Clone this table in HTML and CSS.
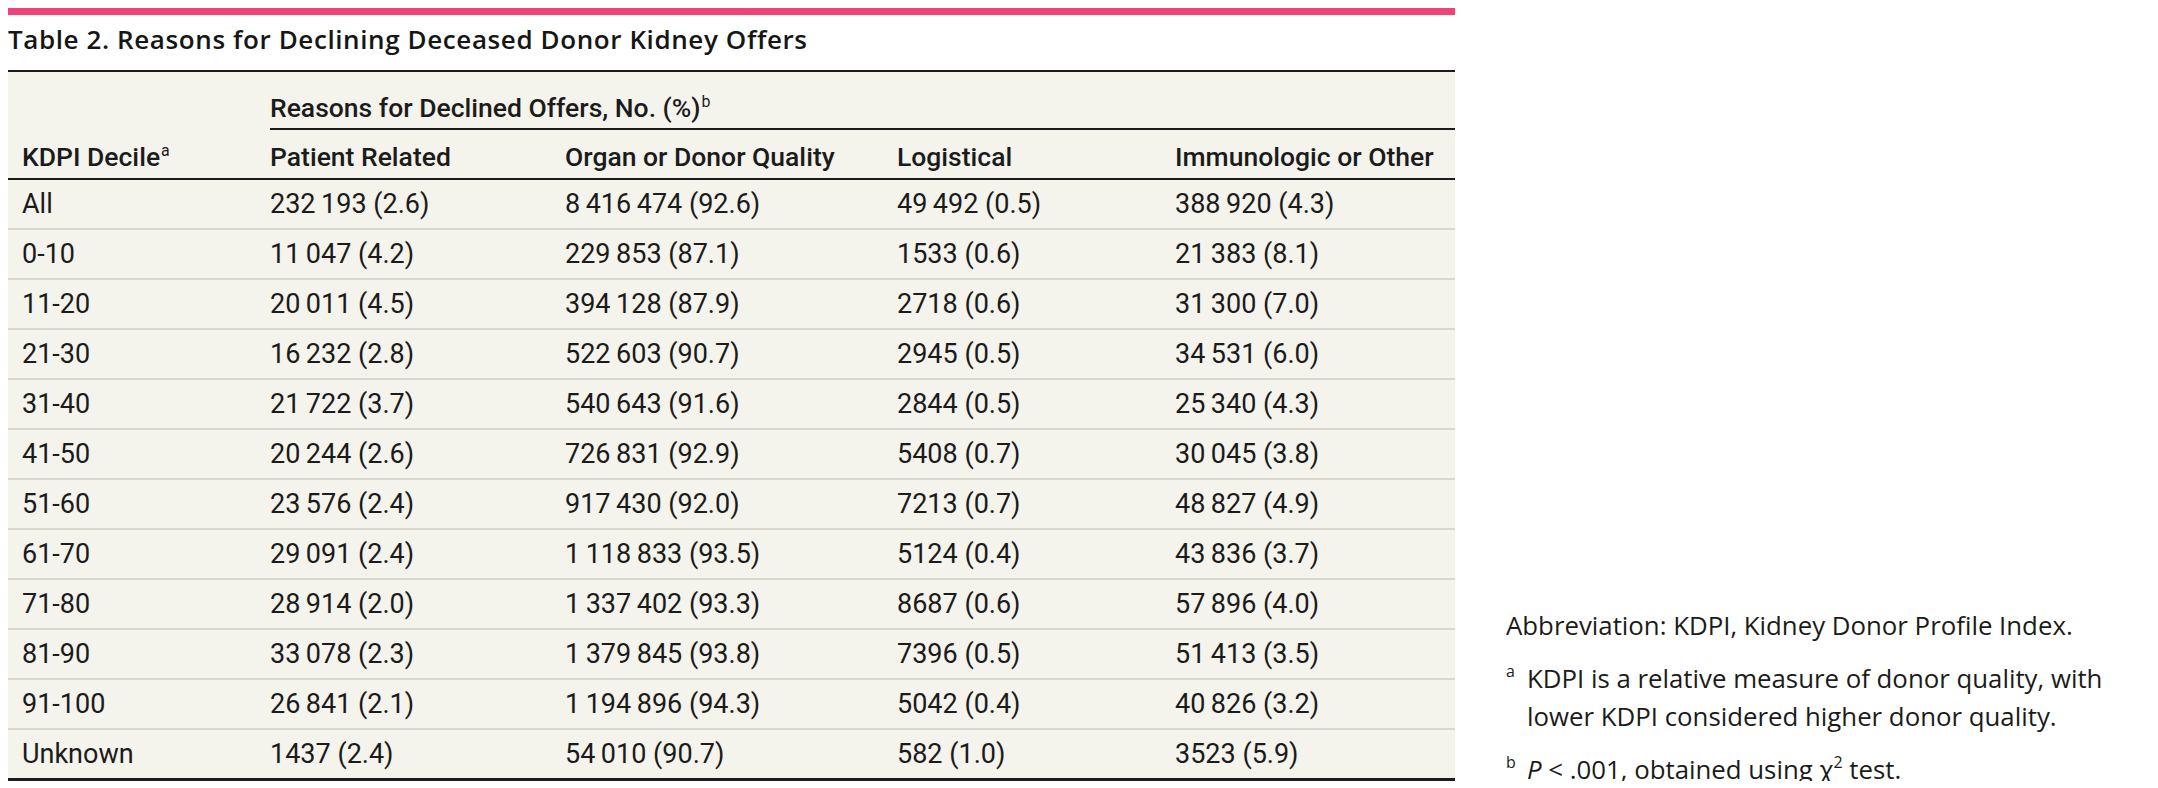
FILE: index.html
```html
<!DOCTYPE html>
<html lang="en">
<head>
<meta charset="utf-8">
<title>Table 2. Reasons for Declining Deceased Donor Kidney Offers</title>
<link rel="stylesheet" href="styles.css">
</head>
<body>
<div class="page">
  <section class="table-block">
    <div class="accent"></div>
    <h2 class="title">Table 2. Reasons for Declining Deceased Donor Kidney Offers</h2>
    <table class="data">
      <colgroup>
        <col class="c1"><col class="c2"><col class="c3"><col class="c4"><col class="c5">
      </colgroup>
      <thead>
        <tr class="span-row">
          <th class="first"></th>
          <th class="spanner" colspan="4">Reasons for Declined Offers, No. (%)<sup>b</sup></th>
        </tr>
        <tr class="head-row">
          <th class="first">KDPI Decile<sup>a</sup></th>
          <th>Patient Related</th>
          <th>Organ or Donor Quality</th>
          <th>Logistical</th>
          <th>Immunologic or Other</th>
        </tr>
      </thead>
      <tbody>
        <tr><td class="first">All</td><td>232&#8201;193 (2.6)</td><td>8&#8201;416&#8201;474 (92.6)</td><td>49&#8201;492 (0.5)</td><td>388&#8201;920 (4.3)</td></tr>
        <tr><td class="first">0-10</td><td>11&#8201;047 (4.2)</td><td>229&#8201;853 (87.1)</td><td>1533 (0.6)</td><td>21&#8201;383 (8.1)</td></tr>
        <tr><td class="first">11-20</td><td>20&#8201;011 (4.5)</td><td>394&#8201;128 (87.9)</td><td>2718 (0.6)</td><td>31&#8201;300 (7.0)</td></tr>
        <tr><td class="first">21-30</td><td>16&#8201;232 (2.8)</td><td>522&#8201;603 (90.7)</td><td>2945 (0.5)</td><td>34&#8201;531 (6.0)</td></tr>
        <tr><td class="first">31-40</td><td>21&#8201;722 (3.7)</td><td>540&#8201;643 (91.6)</td><td>2844 (0.5)</td><td>25&#8201;340 (4.3)</td></tr>
        <tr><td class="first">41-50</td><td>20&#8201;244 (2.6)</td><td>726&#8201;831 (92.9)</td><td>5408 (0.7)</td><td>30&#8201;045 (3.8)</td></tr>
        <tr><td class="first">51-60</td><td>23&#8201;576 (2.4)</td><td>917&#8201;430 (92.0)</td><td>7213 (0.7)</td><td>48&#8201;827 (4.9)</td></tr>
        <tr><td class="first">61-70</td><td>29&#8201;091 (2.4)</td><td>1&#8201;118&#8201;833 (93.5)</td><td>5124 (0.4)</td><td>43&#8201;836 (3.7)</td></tr>
        <tr><td class="first">71-80</td><td>28&#8201;914 (2.0)</td><td>1&#8201;337&#8201;402 (93.3)</td><td>8687 (0.6)</td><td>57&#8201;896 (4.0)</td></tr>
        <tr><td class="first">81-90</td><td>33&#8201;078 (2.3)</td><td>1&#8201;379&#8201;845 (93.8)</td><td>7396 (0.5)</td><td>51&#8201;413 (3.5)</td></tr>
        <tr><td class="first">91-100</td><td>26&#8201;841 (2.1)</td><td>1&#8201;194&#8201;896 (94.3)</td><td>5042 (0.4)</td><td>40&#8201;826 (3.2)</td></tr>
        <tr class="last"><td class="first">Unknown</td><td>1437 (2.4)</td><td>54&#8201;010 (90.7)</td><td>582 (1.0)</td><td>3523 (5.9)</td></tr>
      </tbody>
    </table>
  </section>
  <aside class="notes">
    <p class="note">Abbreviation: KDPI, Kidney Donor Profile Index.</p>
    <p class="note fn"><span class="mark">a</span><span class="fn-text">KDPI is a relative measure of donor quality, with lower KDPI considered higher donor quality.</span></p>
    <p class="note fn"><span class="mark">b</span><span class="fn-text"><i>P</i> &lt; .001, obtained using χ<sup class="sq">2</sup> test.</span></p>
  </aside>
</div>
</body>
</html>
```

FILE: styles.css
```css
html, body {
  background: #ffffff;
}

body {
  margin: 8px;
  color: #1b1b1b;
}

.page {
  display: flex;
  align-items: flex-end;
  gap: 51px;
}

.table-block {
  width: 1447px;
  flex: none;
}

.accent {
  height: 7px;
  background: #f1437a;
}

.title {
  margin: 0;
  padding: 9px 0 15px;
  font-family: "Open Sans", "Liberation Sans", sans-serif;
  font-weight: 600;
  font-size: 26px;
  line-height: 31px;
  letter-spacing: 0.6px;
  color: #161616;
}

.data {
  width: 1447px;
  table-layout: fixed;
  border-collapse: separate;
  border-spacing: 0;
  background: #f4f3ec;
  border-top: 2px solid #1c1c1c;
  font-family: Roboto, "Liberation Sans", sans-serif;
  color: #1b1b1b;
}

.c1 { width: 262px; }
.c2 { width: 295px; }
.c3 { width: 332px; }
.c4 { width: 278px; }
.c5 { width: 280px; }

.data th,
.data td {
  padding: 0;
  text-align: left;
  white-space: nowrap;
  vertical-align: top;
}

.data .first {
  padding-left: 14px;
}

.data th {
  font-weight: 500;
  font-size: 26.5px;
}

.span-row th {
  padding-top: 20px;
  padding-bottom: 4px;
  line-height: 32px;
}

.span-row .spanner {
  border-bottom: 2px solid #1c1c1c;
}

.head-row th {
  padding-top: 6px;
  line-height: 42px;
  border-bottom: 2px solid #1c1c1c;
}

.data sup {
  font-size: 0.6em;
  line-height: 0;
  vertical-align: 0.62em;
  font-weight: 400;
  margin-left: 1px;
}

.data td {
  font-size: 27px;
  font-weight: 400;
  line-height: 48px;
  border-bottom: 2px solid #dad7cc;
}

.data tr.last td {
  border-bottom: 3px solid #1c1c1c;
}

.notes {
  width: 630px;
  flex: none;
  margin-bottom: -7px;
  font-family: "Open Sans", "Liberation Sans", sans-serif;
  font-size: 25.8px;
  line-height: 38px;
  color: #1b1b1b;
}

.note {
  margin: 15px 0 0;
}

.note:first-child {
  margin-top: 0;
}

.fn {
  display: flex;
}

.mark {
  flex: none;
  width: 21px;
  font-size: 0.62em;
  line-height: 1;
  padding-top: 4px;
}

.fn-text {
  flex: 1;
}

.sq {
  font-size: 0.62em;
  line-height: 0;
  vertical-align: 0.7em;
}
```
